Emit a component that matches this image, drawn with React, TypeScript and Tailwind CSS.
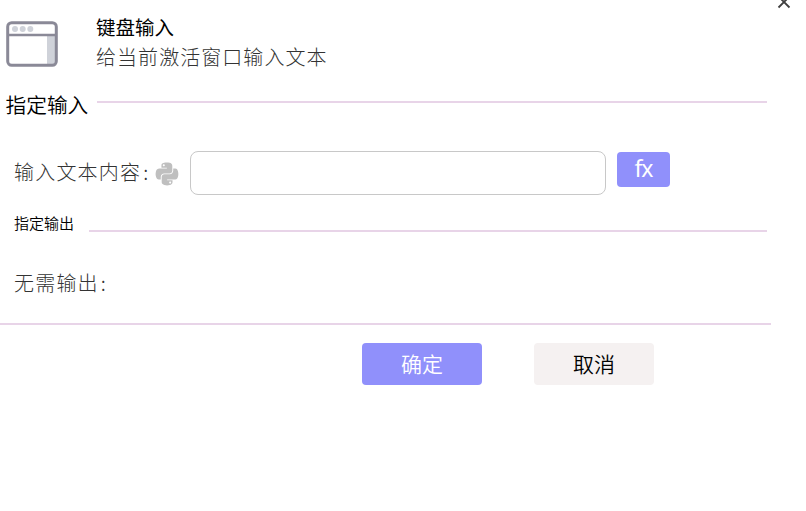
import React from 'react';
import { FaPython } from 'react-icons/fa';

const WindowIcon: React.FC = () => (
  <svg className="h-[46px] w-[52px] shrink-0" viewBox="0 0 52 46" fill="none">
    <rect x="41" y="14" width="8" height="29" fill="#cfd2d9" />
    <rect x="1.7" y="1.7" width="48.6" height="42.6" rx="4" stroke="#8a8997" strokeWidth="3" />
    <path d="M2 14H50" stroke="#8a8997" strokeWidth="2.6" />
    <circle cx="9" cy="8" r="3" fill="#cfd2d9" />
    <circle cx="16.7" cy="8" r="3" fill="#cfd2d9" />
    <circle cx="24.3" cy="8" r="3" fill="#cfd2d9" />
  </svg>
);

const Divider: React.FC<{ className?: string }> = ({ className = '' }) => (
  <div className={`h-0.5 bg-[#e8d4e8] ${className}`} />
);

export default function App() {
  return (
    <div className="relative h-[511px] w-[806px] overflow-hidden bg-white font-['Noto_Sans_CJK_SC',sans-serif] text-black">
      {/* Close button, cut off by the top edge */}
      <button className="absolute -top-[5px] left-[777px]" aria-label="关闭">
        <svg className="h-[14px] w-[14px]" viewBox="0 0 14 14" stroke="#404040" strokeWidth="1.8">
          <path d="M1.5 1.5L12.5 12.5M12.5 1.5L1.5 12.5" />
        </svg>
      </button>

      {/* Header */}
      <header className="flex h-[85px] items-start pl-1.5">
        <div className="pt-[21px]">
          <WindowIcon />
        </div>
        <div className="ml-[38px] pt-3">
          <h1 className="text-[19.5px] leading-[30px]">键盘输入</h1>
          <p className="text-[20px] leading-[30px] font-light tracking-[1.05px] text-[#333]">给当前激活窗口输入文本</p>
        </div>
      </header>

      {/* Input section */}
      <div className="flex h-10 items-start pl-[5.5px]">
        <h2 className="w-[91.5px] text-[20.7px] leading-[39px] font-[350]">指定输入</h2>
        <Divider className="mt-4 w-[670px]" />
      </div>
      <div className="flex h-[85px] items-start pt-[26px] pl-3.5">
        <label className="w-[141px] text-[20px] leading-[42px] font-light tracking-[1.2px] text-[#333]">
          输入文本内容<span className="ml-0.5">:</span>
        </label>
        <FaPython className="mt-2.5 h-[26px] w-6 text-[#bfbfbf]" />
        <input type="text" className="ml-[11px] h-11 w-[416px] rounded-lg border border-[#c8c8c8] px-3 outline-none" />
        <button className="mt-px ml-[11px] h-[35px] w-[53px] rounded bg-[#9090fb] pb-0.5 font-['Noto_Sans',sans-serif] text-[23px] leading-[33px] tracking-[-1px] text-white">
          fx
        </button>
      </div>

      {/* Output section */}
      <div className="flex h-[50px] items-start pl-3.5">
        <h2 className="w-[75px] text-[15px] leading-[26px] font-[350]">指定输出</h2>
        <Divider className="mt-5 w-[678px]" />
      </div>
      <p className="h-[63px] pl-3.5 text-[20px] leading-[46px] font-light tracking-[1.2px] text-[#333]">
        无需输出<span className="ml-0.5">:</span>
      </p>

      {/* Actions */}
      <Divider className="w-[771px]" />
      <div className="flex gap-[52px] pt-[18px] pl-[362px]">
        <button className="h-[42px] w-[120px] rounded bg-[#9090fb] pb-0.5 text-[21px] leading-10 font-[350] text-white">确定</button>
        <button className="h-[42px] w-[120px] rounded bg-[#f5f1f1] pb-0.5 text-[21px] leading-10 font-[350]">取消</button>
      </div>
    </div>
  );
}
